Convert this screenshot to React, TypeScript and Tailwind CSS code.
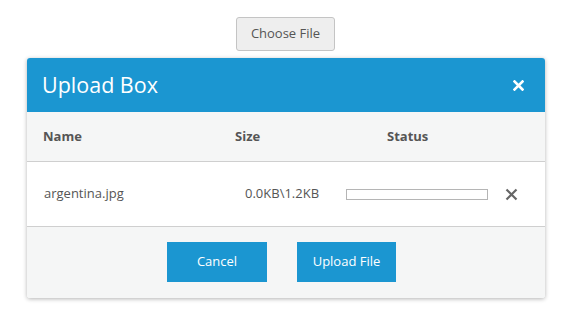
import React from 'react';

const font = { fontFamily: '"Open Sans", "Noto Sans", sans-serif' };

export default function App() {
  return (
    <div className="w-[563px] h-[313px] bg-white" style={font}>
      <div className="flex justify-center pt-[17px] pl-[8px]">
        <button className="h-[34px] w-[99px] rounded-[3px] border border-[#c4c4c4] bg-[#eeeeee] text-[13px] text-[#555]">
          Choose File
        </button>
      </div>

      <div className="ml-[27px] mt-[7px] w-[518px] rounded-[3px] bg-white shadow-[0_1px_4px_rgba(0,0,0,0.3)] overflow-hidden">
        <div className="flex h-[54px] items-center justify-between bg-[#1b96d1] pl-[15px] pr-[21px]">
          <h1 className="text-[21.5px] text-white">Upload Box</h1>
          <svg width="11" height="11" viewBox="0 0 11 11">
            <path d="M1.5 1.5 L9.5 9.5 M9.5 1.5 L1.5 9.5" stroke="#fff" strokeWidth="2.6" strokeLinecap="square" />
          </svg>
        </div>

        <div className="flex h-[50px] items-center border-b border-[#cfcfcf] bg-[#f5f6f6] pl-[16px] text-[13px] font-bold text-[#555]">
          <div className="w-[192px]">Name</div>
          <div className="w-[152px]">Size</div>
          <div>Status</div>
        </div>

        <div className="flex h-[64px] items-center pl-[17px] text-[13px] text-[#555]">
          <div className="w-[201px]">argentina.jpg</div>
          <div className="w-[101px]">0.0KB\1.2KB</div>
          <div className="h-[11px] w-[142px] border border-[#b5b5b5] bg-white" />
          <svg className="ml-[17px]" width="13" height="13" viewBox="0 0 13 13">
            <path d="M1.5 1.5 L11.5 11.5 M11.5 1.5 L1.5 11.5" stroke="#666" strokeWidth="2.2" />
          </svg>
        </div>

        <div className="flex h-[72px] items-center justify-center gap-[30px] border-t border-[#cfcfcf] bg-[#f5f6f6] pb-[2px] pr-[9px]">
          <button className="h-[40px] w-[100px] bg-[#1b96d1] text-[13px] text-white">Cancel</button>
          <button className="h-[40px] w-[99px] bg-[#1b96d1] text-[13px] text-white">Upload File</button>
        </div>
      </div>
    </div>
  );
}
